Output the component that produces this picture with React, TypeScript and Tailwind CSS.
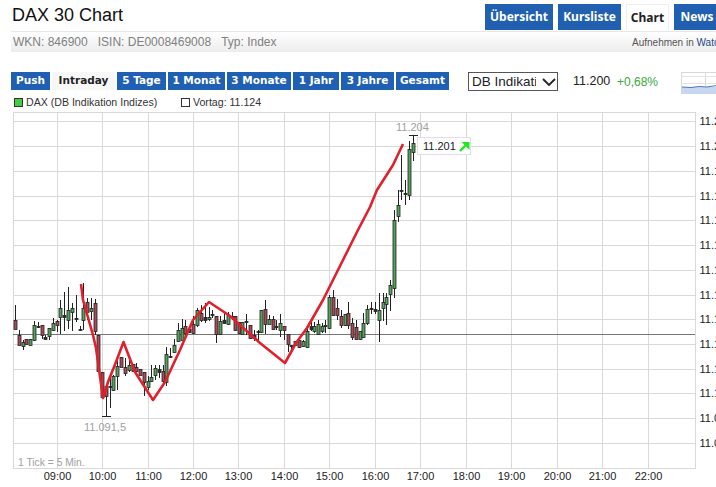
const vLines = [57, 102, 148, 193, 238, 284, 329, 375, 420, 466, 511, 557, 602, 648];
const hLines = [121, 146, 171, 196, 220, 245, 270, 295, 319, 344, 369, 393, 418, 443];
const hours = ["09:00", "10:00", "11:00", "12:00", "13:00", "14:00", "15:00", "16:00", "17:00", "18:00", "19:00", "20:00", "21:00", "22:00"];
const prices = ["11.210", "11.200", "11.190", "11.180", "11.170", "11.160", "11.150", "11.140", "11.130", "11.120", "11.110", "11.100", "11.090", "11.080"];

// x, body top, body bottom, wick top, wick bottom, g/r/d
const candles: [number, number, number, number, number, string][] = [
  [15, 320, 329, 305, 329, "r"], [19, 335, 345, 330, 345, "r"], [23, 342, 346, 340, 350, "g"],
  [26, 339, 344, 339, 344, "r"], [30, 339, 345, 339, 345, "g"], [34, 325, 340, 321, 341, "g"],
  [38, 326, 327, 322, 328, "d"], [42, 325, 335, 325, 339, "r"], [45, 337, 339, 335, 340, "d"],
  [49, 328, 336, 328, 340, "g"], [53, 323, 330, 318, 331, "g"], [57, 321, 325, 320, 332, "r"],
  [60, 308, 317, 300, 334, "g"], [64, 315, 317, 292, 331, "d"], [68, 310, 320, 287, 329, "g"],
  [72, 308, 312, 303, 331, "g"], [76, 318, 319, 295, 322, "d"], [80, 329, 330, 326, 331, "d"],
  [83, 308, 320, 283, 330, "g"], [87, 302, 312, 298, 320, "r"], [91, 308, 311, 298, 320, "g"],
  [95, 303, 331, 299, 335, "r"], [98, 335, 371, 335, 372, "r"], [102, 372, 397, 372, 397, "r"],
  [106, 386, 396, 386, 416, "r"], [110, 386, 387, 375, 408, "d"], [113, 376, 390, 375, 391, "g"],
  [117, 366, 376, 360, 390, "g"], [121, 357, 367, 357, 367, "r"], [125, 367, 373, 358, 376, "r"],
  [129, 365, 370, 355, 372, "g"], [133, 364, 371, 364, 371, "r"], [136, 367, 371, 363, 372, "r"],
  [140, 369, 375, 369, 375, "r"], [144, 372, 382, 372, 396, "r"], [148, 381, 387, 376, 390, "g"],
  [151, 377, 381, 365, 382, "g"], [155, 368, 375, 365, 380, "g"], [159, 369, 372, 365, 378, "d"],
  [163, 371, 381, 365, 383, "r"], [166, 354, 382, 347, 386, "g"], [170, 356, 357, 348, 358, "d"],
  [174, 345, 352, 339, 353, "g"], [178, 330, 341, 323, 342, "g"], [182, 328, 340, 319, 340, "g"],
  [185, 326, 333, 320, 338, "r"], [189, 329, 332, 327, 333, "d"], [193, 324, 333, 316, 334, "r"],
  [197, 310, 325, 308, 327, "g"], [201, 313, 320, 305, 322, "r"], [205, 317, 320, 303, 323, "d"],
  [209, 317, 319, 307, 321, "g"], [212, 314, 315, 310, 318, "d"], [216, 316, 334, 316, 343, "r"],
  [220, 321, 334, 316, 335, "g"], [224, 320, 323, 312, 324, "d"], [228, 315, 324, 312, 325, "g"],
  [232, 316, 317, 312, 320, "d"], [235, 316, 330, 316, 331, "r"], [239, 322, 333, 322, 334, "r"],
  [242, 322, 334, 322, 334, "g"], [246, 321, 322, 314, 335, "d"], [250, 325, 338, 325, 339, "r"],
  [254, 335, 338, 330, 341, "d"], [258, 331, 332, 330, 343, "d"], [261, 310, 332, 310, 333, "g"],
  [265, 309, 324, 300, 334, "r"], [269, 319, 324, 315, 324, "g"], [273, 319, 329, 316, 330, "r"],
  [276, 326, 327, 320, 330, "d"], [280, 323, 330, 314, 337, "g"], [284, 326, 330, 326, 340, "r"],
  [288, 334, 344, 334, 352, "r"], [291, 345, 346, 345, 353, "d"], [295, 341, 345, 341, 346, "g"],
  [299, 340, 347, 340, 348, "r"], [303, 341, 346, 340, 347, "g"], [307, 331, 347, 325, 348, "g"],
  [311, 326, 329, 320, 331, "d"], [314, 326, 331, 322, 333, "g"], [318, 324, 334, 320, 335, "g"],
  [322, 326, 331, 323, 333, "g"], [325, 325, 326, 320, 333, "d"], [329, 297, 328, 295, 329, "g"],
  [333, 297, 315, 290, 316, "r"], [337, 308, 315, 299, 320, "r"], [341, 316, 325, 310, 328, "r"],
  [345, 314, 325, 314, 326, "g"], [348, 313, 325, 302, 329, "r"], [352, 323, 337, 318, 340, "r"],
  [356, 327, 339, 320, 340, "r"], [360, 331, 339, 331, 340, "g"], [363, 323, 337, 313, 338, "g"],
  [367, 309, 323, 305, 325, "g"], [371, 308, 309, 302, 314, "d"], [375, 309, 311, 302, 314, "d"],
  [379, 310, 320, 293, 342, "g"], [383, 302, 308, 293, 321, "g"], [386, 297, 304, 293, 325, "g"],
  [390, 285, 294, 280, 311, "g"], [394, 220, 288, 210, 298, "g"], [398, 205, 216, 190, 222, "g"],
  [401, 190, 191, 155, 200, "d"], [405, 193, 194, 180, 205, "d"], [409, 149, 195, 141, 200, "g"],
  [413, 143, 152, 135, 161, "g"],
];

const redLine =
  "81,284 83,300 93,335 96,348 103,398 108,382 116,362 123.5,342 135,372 153,400 165,382 180,350 193,320 209,302 230,316 240,325 260,343 285,363 296,343 307,328 323,300 338,270 358,230 370,207 377,190 393,165 403,144";

const fills: Record<string, string> = { g: "#55a05a", r: "#a84a58", d: "#333333" };

function Chart() {
  return (
    <svg width={716} height={375} viewBox="0 112 716 375" className="block font-['Liberation_Sans',sans-serif]">
      {vLines.map((x) => (
        <line key={x} x1={x + 0.5} x2={x + 0.5} y1={112} y2={468} stroke="#d9d9d9" />
      ))}
      {hLines.map((y) => (
        <line key={y} x1={13} x2={695} y1={y + 0.5} y2={y + 0.5} stroke="#d9d9d9" />
      ))}
      <rect x={13.5} y={112.5} width={682} height={356} fill="none" stroke="#d9d9d9" />
      <line x1={13} x2={695} y1={334.5} y2={334.5} stroke="#777777" />
      {candles.map(([x, t, b, wt, wb, c]) => (
        <g key={x}>
          <line x1={x + 0.5} x2={x + 0.5} y1={wt} y2={wb} stroke="#222222" />
          <rect x={x - 1} y={t + 0.5} width={3} height={b - t} fill={fills[c]} stroke="#222222" strokeWidth={0.8} />
        </g>
      ))}
      <line x1={102} x2={111} y1={416.5} y2={416.5} stroke="#222222" />
      <line x1={409} x2={418} y1={135.5} y2={135.5} stroke="#222222" />
      <polyline points={redLine} fill="none" stroke="#e0202c" strokeWidth={2.6} strokeLinejoin="round" />
      <text x={396} y={131} fontSize={11} fill="#a0a0a0">11.204</text>
      <text x={84} y={431} fontSize={11} fill="#a0a0a0">11.091,5</text>
      <text x={18} y={466} fontSize={10.3} fill="#a0a0a0">1 Tick = 5 Min.</text>
      {hours.map((h, i) => (
        <text key={h} x={vLines[i] + 0.5} y={480} fontSize={11} fill="#222222" textAnchor="middle">{h}</text>
      ))}
      {prices.map((p, i) => (
        <text key={p} x={699.5} y={hLines[i] + 4} fontSize={11} fill="#222222">{p}</text>
      ))}
    </svg>
  );
}

function TopTab({ label, active, w }: { label: string; active?: boolean; w: string }) {
  return (
    <div
      className={`${w} shrink-0 h-[26px] flex items-center justify-center text-[12px] font-bold ${
        active ? "bg-white text-[#222] border-x border-t border-[#eeeeee]" : "bg-[#2160b0] text-white"
      }`}
    >
      {label}
    </div>
  );
}

function RangeTab({ label, active, w }: { label: string; active?: boolean; w: string }) {
  return (
    <div
      className={`${w} h-[18px] flex items-center justify-center text-[10.5px] font-bold ${
        active ? "bg-[#f7f7f7] text-[#222]" : "bg-[#1f5fb4] text-white"
      }`}
    >
      {label}
    </div>
  );
}

export default function App() {
  return (
    <div className="relative w-[716px] h-[487px] overflow-hidden bg-white font-['Liberation_Sans',sans-serif]">
      <div className="flex h-[31px] pt-1">
        <div className="w-[485px] shrink-0 pl-3 text-[18px] leading-[22px] text-[#111]">DAX 30 Chart</div>
        <div className="flex gap-[5px] font-['Noto_Sans',sans-serif]">
          <TopTab label="Übersicht" w="w-[68px]" />
          <TopTab label="Kursliste" w="w-[63px]" />
          <TopTab label="Chart" w="w-[43px]" active />
          <TopTab label="News" w="w-[46px]" />
        </div>
      </div>

      <div className="ml-[11px] h-[21px] flex items-center justify-between border-t border-[#e8e8e8] bg-gradient-to-b from-white to-[#ececec] pl-[2px]">
        <div className="flex gap-[10px] text-[12px] text-[#808080]">
          <span>WKN: 846900</span>
          <span>ISIN: DE0008469008</span>
          <span>Typ: Index</span>
        </div>
        <div className="w-[84px] shrink-0 whitespace-nowrap overflow-hidden text-[10px] text-[#555]">
          Aufnehmen in <span className="text-[#27467f]">Watchlist</span>
        </div>
      </div>

      <div className="flex items-start pl-[11px] mt-5 h-[19px] font-['DejaVu_Sans',sans-serif]">
        <div className="flex gap-[2px]">
          <RangeTab label="Push" w="w-[39px]" />
          <RangeTab label="Intraday" w="w-[63px]" active />
          <RangeTab label="5 Tage" w="w-[49px]" />
          <RangeTab label="1 Monat" w="w-[57px]" />
          <RangeTab label="3 Monate" w="w-[64px]" />
          <RangeTab label="1 Jahr" w="w-[46px]" />
          <RangeTab label="3 Jahre" w="w-[53px]" />
          <RangeTab label="Gesamt" w="w-[53px]" />
        </div>
        <div className="relative ml-[19px] w-[90px] h-[19px] shrink-0">
          <select
            defaultValue="DB Indikation"
            className="block appearance-none w-full h-full pl-[3px] pr-[21px] border border-[#555] bg-white text-[13.5px] leading-none text-[#222] font-['Liberation_Sans',sans-serif]"
          >
            <option>DB Indikation</option>
          </select>
          <svg width={14} height={8} viewBox="0 0 14 8" className="absolute right-[2px] top-[6px] pointer-events-none">
            <path d="M1 1 L7 7 L13 1" fill="none" stroke="#222" strokeWidth={1.8} />
          </svg>
        </div>
        <span className="ml-[15px] w-[36px] self-center whitespace-nowrap text-[12.5px] text-[#222] font-['Liberation_Sans',sans-serif]">11.200</span>
        <span className="ml-2 w-[40px] self-center whitespace-nowrap text-[12px] text-[#3aa83a] font-['Liberation_Sans',sans-serif]">+0,68%</span>
        <svg width={36} height={22} viewBox="0 0 36 22" className="ml-6 shrink-0">
          <rect x={0.5} y={0.5} width={35} height={21} fill="white" stroke="#d8d8d8" />
          <line x1={24.5} x2={24.5} y1={0} y2={14} stroke="#d8d8d8" />
          <line x1={0} x2={36} y1={4.5} y2={4.5} stroke="#e4e4e4" />
          <line x1={0} x2={36} y1={11.5} y2={11.5} stroke="#e4e4e4" />
          <rect x={0} y={15} width={36} height={7} fill="#c8d6f0" />
          <path d="M1 15 L10 15.5 L18 14.5 L26 15 L36 13.5" fill="none" stroke="#4a78c0" />
        </svg>
      </div>

      <div className="flex items-center h-[13px] mt-[5px] pl-[14px] text-[10.6px] text-[#333]">
        <span className="w-[9px] h-[9px] bg-[#44cc44] border border-[#333]" />
        <span className="ml-[3px] w-[155px]">DAX (DB Indikation Indizes)</span>
        <span className="w-[9px] h-[9px] bg-white border border-[#333]" />
        <span className="ml-[3px]">Vortag: 11.124</span>
      </div>

      <div className="mt-[3px]">
        <Chart />
      </div>

      <div className="absolute left-[417px] top-[137px] w-[54px] h-[18px] flex items-center gap-[3px] pl-[5px] bg-white border border-[#e4dcec] text-[11px] text-[#222]">
        <span>11.201</span>
        <svg width={11} height={11} viewBox="0 0 11 11">
          <path d="M1 10 L7.5 3.5" stroke="#1ee81e" strokeWidth={2.4} />
          <path d="M2.5 1 H10.5 V9 Z" fill="#1ee81e" />
        </svg>
      </div>
    </div>
  );
}
